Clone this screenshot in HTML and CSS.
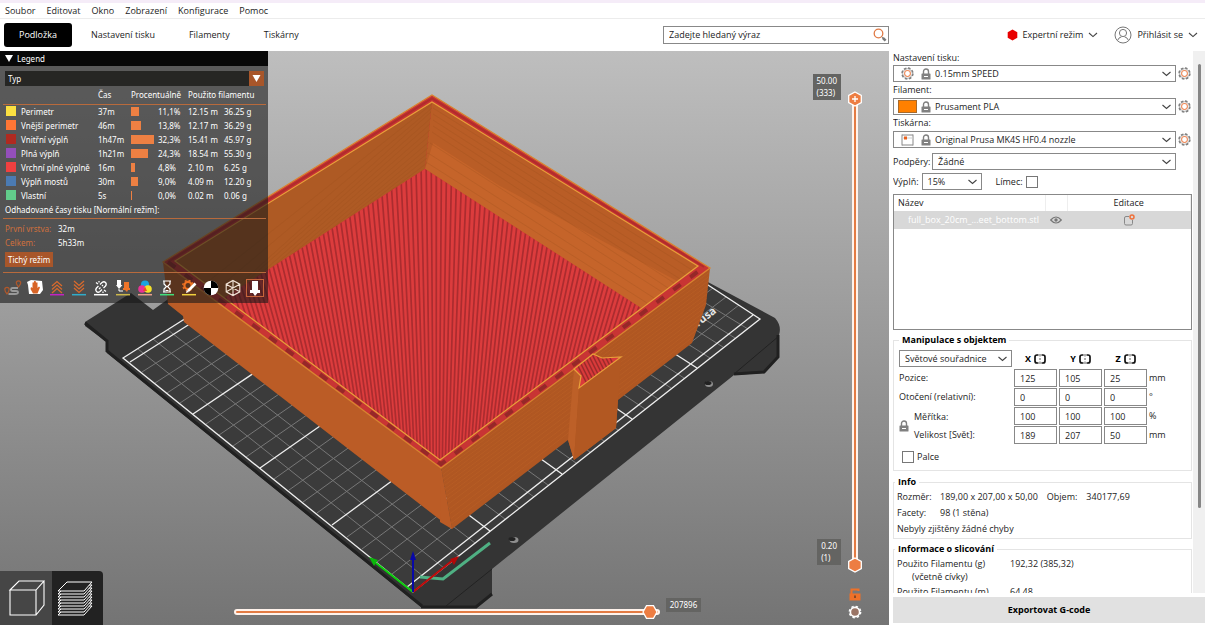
FILE: index.html
```html
<!DOCTYPE html>
<html lang="cs">
<head>
<meta charset="utf-8">
<title>PrusaSlicer</title>
<link rel="stylesheet" href="styles.css">
</head>
<body>
<svg class="defs" aria-hidden="true">
  <symbol id="lock" viewBox="0 0 10 12"><path d="M2.5 6V3.5a2.5 2.5 0 0 1 5 0V6" fill="none" stroke="#808080" stroke-width="1.4"/><rect x=".5" y="5.5" width="9" height="6" rx=".6" fill="#808080"/><path d="M3 8.5h4" stroke="#fff" stroke-width="1"/></symbol>
  <symbol id="gear" viewBox="0 0 12 12"><circle cx="6" cy="6" r="5" fill="none" stroke="#7d7d7d" stroke-width="1.4" stroke-dasharray="2.4 1.5"/><circle cx="6" cy="6" r="4.4" fill="none" stroke="#8b8b8b" stroke-width=".6"/><circle cx="6" cy="6" r="2.7" fill="none" stroke="#ed8a5a" stroke-width="1"/></symbol>
  <symbol id="chev" viewBox="0 0 10 6"><path d="M1 1l4 3.6L9 1" fill="none" stroke="#444" stroke-width="1.1"/></symbol>
  <symbol id="mirror" viewBox="0 0 12 10"><path d="M4.500 1H3Q1 1 1 3V7Q1 9 3 9H4.500M7.500 1H9Q11 1 11 3V7Q11 9 9 9H7.500" fill="none" stroke="#111" stroke-width="1.7"/><path d="M6 0v2.500M6 4v2M6 7.500V10" stroke="#333" stroke-width=".8"/></symbol>
</svg>

<nav class="menubar">
  <button>Soubor</button><button>Editovat</button><button>Okno</button><button>Zobrazení</button><button>Konfigurace</button><button>Pomoc</button>
</nav>

<header class="toolbar">
  <div class="toolbar-left">
    <nav class="tabs">
      <button class="tab active">Podložka</button><button class="tab">Nastavení tisku</button><button class="tab">Filamenty</button><button class="tab">Tiskárny</button>
    </nav>
    <div class="search">
      <input type="text" aria-label="Hledat" value="Zadejte hledaný výraz">
      <svg width="14" height="14" viewBox="0 0 14 14"><circle cx="5.500" cy="5.500" r="4.300" fill="none" stroke="#e07a45" stroke-width="1.300"/><path d="M8.600 8.600l1.500 1.500" stroke="#888" stroke-width="1"/><path d="M9.800 9.800l2.800 2.800" stroke="#777" stroke-width="2.600"/></svg>
    </div>
  </div>
  <div class="toolbar-right">
    <button class="mode"><svg width="11" height="12" viewBox="0 0 11 12"><path d="M5.500 .5L10.300 3.200V8.800L5.500 11.500L.7 8.800V3.200Z" fill="#e80000"/></svg>Expertní režim<svg width="10" height="6"><use href="#chev"/></svg></button>
    <button class="mode"><svg width="18" height="18" viewBox="0 0 18 18" fill="none" stroke="#777" stroke-width="1"><circle cx="9" cy="9" r="8"/><circle cx="9" cy="7" r="3.600"/><path d="M3.500 14.500Q4.500 11.500 7.500 10.800M14.500 14.500Q13.500 11.500 10.500 10.800"/></svg>Přihlásit se<svg width="10" height="6"><use href="#chev"/></svg></button>
  </div>
</header>

<main class="workspace">
  <section class="viewport">
    <svg class="scene" viewBox="0 51 889 574" preserveAspectRatio="xMinYMin slice">
      <defs>
        <linearGradient id="bg" x1="0" y1="0" x2="0" y2="1"><stop offset="0" stop-color="#bebebe"/><stop offset="1" stop-color="#747474"/></linearGradient>
        <clipPath id="floor"><path d="M425 169L641 308L440 460L224 298Z"/></clipPath>
        <clipPath id="star"><path d="M574 369L593 354L602 358L621 357L579 388L581 376Z"/></clipPath>
        <clipPath id="front"><path d="M441 468L710 268L706 305L692 343L618 400L616 428L574 460L568 440L452 529Z"/></clipPath>
      </defs>
      <rect y="51" width="889" height="574" fill="url(#bg)"/>
      <path d="M85 322L131 293L153 310L250 240L706 281L775 318Q782 326 779 335L778 357L764 373L734 375L492 569V594L476 607H421L107 353V342L85 326Z" fill="#343434"/>
      <path d="M85 323L107 341V351L422 606M778 335L778 357L764 372L734 374M492 594L476 607H421" fill="none" stroke="#202020" stroke-width="3"/>
      <path d="M779 336L734 374M492 569L446 606" stroke="#222" fill="none"/>
      <path d="M123 358L477 134L760 319L413 592Z" fill="#3b3b3b"/>
      <path fill="none" stroke="#777" stroke-width="1" d="M392 574L739 305M377 562L726 297M362 549L713 288M347 537L700 280M317 513l110-80M303 502l110-79M289 490l110-78M274 479l110-78M246 457l110-76M233 446l110-76M219 435l110-75M206 424l110-75M180 403l110-73M167 393l110-72M155 383l110-71M142 372l110-70
        M428 580L138 349M444 568L153 339M459 556L168 330M475 543L183 320M505 519L213 301M519 508L227 292M534 497L242 283M548 485L256 274M576 463L284 256M590 452L298 247M604 441L312 238M618 430L325 230M645 409L352 213M658 399L365 205M671 388L378 197M684 378L391 188M710 358L416 173M723 347L429 164M735 338L441 157M748 329L453 149"/>
      <path fill="none" stroke="#eee" stroke-width="1.300" d="M123 358L477 134L760 319L413 592ZM407 587L753 315M130 362L240 292M332 525l110-81M260 468l110-77M193 414l110-74M490 531L198 311M562 474L270 265M632 419L339 221M697 368L404 180"/>
      <text x="698" y="327" transform="rotate(-38 698 327)" class="bed-name">rusa</text>
      <ellipse cx="709" cy="384" rx="4" ry="3" fill="#8f8f8f"/><ellipse cx="708" cy="383" rx="3.500" ry="2" fill="#222"/>
      <ellipse cx="514" cy="540" rx="4.500" ry="3" fill="#8f8f8f"/><ellipse cx="512" cy="539" rx="3.500" ry="2" fill="#222"/>

      <path d="M163 262L441 468L452 529L184 322L183 316L168 304Z" fill="#bb5c26"/>
      <path d="M441 468L710 268L706 305L692 343L618 400L616 428L574 460L568 440L452 529Z" fill="#b05722"/>
      <g clip-path="url(#front)" fill="none" stroke="#c06629" stroke-width=".4"><path d="M441 472L715 268M441 476L715 272M441 480L715 276M441 484L715 280M441 488L715 284M441 492L715 288M441 496L715 292M441 500L715 296M441 504L715 300M443 508L715 304M445 512L715 308M447 516L715 312M449 520L715 316M450 524L715 320"/></g>
      <path d="M441 468L440 522L452 529Z" fill="#bb5c26"/>
      <path d="M163 262L432 95L710 268L441 468Z" fill="#c83434"/>
      <path d="M168 262L432 98.500L704 267" fill="none" stroke="#b02c2c" stroke-width="2"/>
      <path d="M168 262L441 464L704 267" fill="none" stroke="#962828" stroke-width="4" stroke-dasharray="9 12"/>
      <path d="M163 262L432 95L710 268L441 468Z" fill="none" stroke="#d98530" stroke-width="1.300"/>
      <path d="M175 261L432 102L425 169L224 298Z" fill="#ae5a24"/>
      <path d="M432 102L698 266L641 308L425 169Z" fill="#b95d26"/>
      <path d="M433 143L500 186L677 281L641 308L425 169Z" fill="#c5642a"/>
      <g stroke="#9b501f" stroke-width=".5" opacity=".55"><path d="M432 104L205 284M432 108L215 291M431 112L224 298M431 118L240 287M430 124L258 276M430 130L276 264M429 136L294 253M429 142L312 241M428 148L330 230M428 153L348 218M427 158L366 207M427 163L390 191"/><path d="M433 108L692 270M433 114L686 275M433 120L680 279M433 126L674 283M432 132L668 288M430 143L662 292M428 153L654 298M426 162L647 303"/></g>
      <g clip-path="url(#floor)"><path d="M170 150H660V470H170Z" fill="#dc3c3d"/><circle cx="436" cy="900" r="600" fill="none" stroke="#ab2c2f" stroke-width="500" stroke-dasharray="1.700 2.500"/></g>
      <path d="M175 261L432 102L698 266L440 460Z" fill="none" stroke="#e8a03a" stroke-width="1.200"/>
      <path d="M574 369L581 376L579 388L574 460L568 440Z" fill="#bd6028"/>
      <path d="M579 388L621 357L618 400L616 428L574 460Z" fill="#b25822"/>
      <g clip-path="url(#star)"><path d="M570 350H625V390H570Z" fill="#d93a3a"/><path d="M570 350l20 40M574 350l20 40M578 350l20 40M582 350l20 40M586 350l20 40M590 350l20 40M594 350l20 40M598 350l20 40M602 350l20 40M606 350l20 40" stroke="#9d2b2b" stroke-width="1.500"/></g>
      <path d="M574 369L593 354L602 358L621 357L579 388L581 376Z" fill="none" stroke="#e8a03a" stroke-width="1.200"/>

      <path d="M420 577L443 579L490 543" fill="none" stroke="#4fb083" stroke-width="3"/>
      <path d="M413 592L376 563" stroke="#0bcf0b" stroke-width="2"/><path d="M369 557l9 3-4 6Z" fill="#0ab80a"/>
      <path d="M413 592L453 560" stroke="#c00808" stroke-width="2"/><path d="M459 556l-9 3 4 6Z" fill="#b30808"/>
      <path d="M413 592V557" stroke="#0808a8" stroke-width="2"/><path d="M413 551l3 9h-6Z" fill="#0808a8"/>
    </svg>

    <aside class="legend">
      <h2><svg width="8" height="7" viewBox="0 0 8 7"><path d="M0 0H8L4 7Z" fill="#fff"/></svg>Legend</h2>
      <div class="legend-body">
        <select class="view-type" aria-label="Zobrazení"><option>Typ</option></select>
        <table>
          <colgroup><col class="c-swatch"><col class="c-name"><col class="c-time"><col class="c-bar"><col class="c-pct"><col class="c-len"><col></colgroup>
          <thead><tr><th colspan="2"></th><th>Čas</th><th colspan="2">Procentuálně</th><th colspan="2">Použito filamentu</th></tr></thead>
          <tbody>
            <tr><td><i class="sw yellow"></i></td><td>Perimetr</td><td>37m</td><td><i class="bar" style="width:8px"></i></td><td>11,1%</td><td>12.15 m</td><td>36.25 g</td></tr>
            <tr><td><i class="sw orange"></i></td><td>Vnější perimetr</td><td>46m</td><td><i class="bar" style="width:10px"></i></td><td>13,8%</td><td>12.17 m</td><td>36.29 g</td></tr>
            <tr><td><i class="sw darkred"></i></td><td>Vnitřní výplň</td><td>1h47m</td><td><i class="bar" style="width:23px"></i></td><td>32,3%</td><td>15.41 m</td><td>45.97 g</td></tr>
            <tr><td><i class="sw purple"></i></td><td>Plná výplň</td><td>1h21m</td><td><i class="bar" style="width:17px"></i></td><td>24,3%</td><td>18.54 m</td><td>55.30 g</td></tr>
            <tr><td><i class="sw red"></i></td><td>Vrchní plné výplně</td><td>16m</td><td><i class="bar" style="width:4px"></i></td><td>4,8%</td><td>2.10 m</td><td>6.25 g</td></tr>
            <tr><td><i class="sw blue"></i></td><td>Výplň mostů</td><td>30m</td><td><i class="bar" style="width:7px"></i></td><td>9,0%</td><td>4.09 m</td><td>12.20 g</td></tr>
            <tr><td><i class="sw green"></i></td><td>Vlastní</td><td>5s</td><td><i class="bar" style="width:1px"></i></td><td>0,0%</td><td>0.02 m</td><td>0.06 g</td></tr>
          </tbody>
        </table>
        <p class="times-title">Odhadované časy tisku [Normální režim]:</p>
        <dl><dt>První vrstva:</dt><dd>32m</dd><dt>Celkem:</dt><dd>5h33m</dd></dl>
        <button class="quiet">Tichý režim</button>
        <div class="tools">
          <button aria-label="Přejezdy"><svg viewBox="0 0 18 18"><path d="M4.500 15H11Q14 15 14 13.500T12 12H8.500Q7 12 7 10.500T8.500 9H14" fill="none" stroke="#999" stroke-width="1.800"/><path d="M3 15Q.8 12 .8 10.500a2.200 2.200 0 0 1 4.400 0Q5.200 12 3 15ZM14.500 8Q12.300 5 12.300 4a2.200 2.200 0 0 1 4.400 0Q16.700 5 14.500 8Z" fill="none" stroke="#b0582b" stroke-width="1.200"/></svg></button>
          <button aria-label="Čištění"><svg viewBox="0 0 18 18"><path d="M1 3l4-2 11 1 1 9-3 4-11 0-1-9Z" fill="#fff"/><path d="M5 8l1.500 1V3.500l1.300 0 .4-1.500 1.400 0 .4 1.500 1.500 0V9l1.500-1.500 1 1L11.500 14.500H7L4.500 10Z" fill="#d86426"/></svg></button>
          <button aria-label="Retrakce"><svg viewBox="0 0 18 18"><path d="M4 7l5-4.500L14 7M4 10.500L9 6l5 4.500M4 14l5-4.500 5 4.500" fill="none" stroke="#d96a2c" stroke-width="1.300"/><path d="M2 15.700h14" stroke="#c322c3" stroke-width="1.500"/></svg></button>
          <button aria-label="Deretrakce"><svg viewBox="0 0 18 18"><path d="M4 2l5 4.500L14 2M4 5.500L9 10l5-4.500M4 9l5 4.500L14 9" fill="none" stroke="#d96a2c" stroke-width="1.300"/><path d="M2 15.700h14" stroke="#31acc9" stroke-width="1.500"/></svg></button>
          <button aria-label="Švy"><svg viewBox="0 0 18 18"><path d="M8 5.500L10 3.500Q12 2 13.500 3.500T13.500 7L11.500 9M10 10.500L8 12.500Q6 14 4.500 12.500T4.500 9L6.500 7M7 10l1.500-1.500M10 7l1-1M4 3.500l2 1.500M7 2v1.500M12 11l2 1.500M11 12.500V14" fill="none" stroke="#fff" stroke-width="1.300"/><path d="M2 15.700h14" stroke="#fff" stroke-width="1.500"/></svg></button>
          <button aria-label="Výměny nástroje"><svg viewBox="0 0 18 18"><path d="M3 1h4v5h1.500L5 10 2 6h1Z" fill="#fff"/><path d="M10 3h5v6h1v2h-2l-1 2-2-2H9V9h1Z" fill="#ee7429"/><path d="M5 10v2h4" stroke="#fff" fill="none"/><path d="M2 15.700h14" stroke="#cdb84a" stroke-width="1.500"/></svg></button>
          <button aria-label="Změny barvy"><svg viewBox="0 0 18 18"><circle cx="9" cy="5.500" r="4" fill="#19a5e0"/><circle cx="6" cy="10" r="3.800" fill="#e73395"/><circle cx="12" cy="10" r="3.800" fill="#f5e12a"/><path d="M9 7.500l2 4.500H7Z" fill="#e84a2c"/><path d="M2 15.700h14" stroke="#e9a08d" stroke-width="1.500"/></svg></button>
          <button aria-label="Pauzy"><svg viewBox="0 0 18 18"><path d="M5 2H13M5 13H13M6 2V5L8.500 7.500 6 10v3M12 2V5L9.500 7.500 12 10v3M7.500 11.500h3" fill="none" stroke="#fff" stroke-width="1.200"/><path d="M2 15.700h14" stroke="#42df79" stroke-width="1.500"/></svg></button>
          <button aria-label="Vlastní G-kódy"><svg viewBox="0 0 18 18"><circle cx="8" cy="6.500" r="3.600" fill="none" stroke="#ee7122" stroke-width="2.200"/><circle cx="8" cy="6.500" r="5.200" fill="none" stroke="#ee7122" stroke-width="1.400" stroke-dasharray="2 2.080"/><path d="M15.500 4.500L8 12" stroke="#fff" stroke-width="2.600"/><path d="M6 14l.8-3L9 13Z" fill="#fff"/><path d="M2 15.700h14" stroke="#f1d13d" stroke-width="1.500"/></svg></button>
          <button aria-label="Těžiště"><svg viewBox="0 0 18 18"><circle cx="9" cy="9" r="7.300" fill="#fff"/><path d="M9 9V1.700A7.300 7.300 0 0 1 16.300 9ZM9 9V16.300A7.300 7.300 0 0 1 1.700 9Z" fill="#000"/></svg></button>
          <button aria-label="Obálky"><svg viewBox="0 0 18 18"><path d="M9 1.500L15.800 5.200V12.800L9 16.500L2.200 12.800V5.200ZM9 1.500V16.500M2.200 5.200L15.800 12.800M15.800 5.200L2.200 12.800" fill="none" stroke="#f1e3d6" stroke-width="1.100"/></svg></button>
          <button class="on" aria-label="Značka nástroje"><svg viewBox="0 0 16 16"><path d="M5 1h6v9h2v3h-2.500L8 16 6 13H3v-3h2Z" fill="#fff"/></svg></button>
        </div>
      </div>
    </aside>

    <div class="views">
      <button aria-label="3D editor"><svg viewBox="0 0 40 40"><path d="M3 12L12 3H37L29 12ZM3 12V37H29V12M29 37L37 27V3" fill="none" stroke="#fff" stroke-width="1.100"/></svg></button>
      <button class="on" aria-label="Náhled"><svg viewBox="0 0 40 40" fill="#222" stroke="#fff" stroke-width="1"><path d="M3 37L12 28H37L29 37Z"/><path d="M3 34L12 25H37L29 34Z"/><path d="M3 31L12 22H37L29 31Z"/><path d="M3 28L12 19H37L29 28Z"/><path d="M3 25L12 16H37L29 25Z"/><path d="M3 22L12 13H37L29 22Z"/><path d="M3 19L12 10H37L29 19Z"/><path d="M3 16L12 7H37L29 16Z"/><path d="M3 13L12 4H37L29 13Z"/></svg></button>
    </div>

    <div class="moves">
      <input type="range" min="0" max="207896" value="207896" aria-label="Pohyby">
      <output>207896</output>
    </div>

    <div class="layers">
      <div class="layer-slider">
        <input type="range" min="1" max="333" value="333" aria-label="Horní vrstva" class="upper">
        <input type="range" min="1" max="333" value="1" aria-label="Dolní vrstva">
        <output class="top">50.00<br>(333)</output>
        <output class="bottom">0.20<br>(1)</output>
      </div>
      <button aria-label="Zámek"><svg width="12" height="14" viewBox="0 0 12 14"><path d="M2.500 7V2.500H9.500V4" fill="none" stroke="#ee7129" stroke-width="2"/><rect x=".5" y="6.500" width="11" height="7" fill="#ee7129"/><path d="M5 8.500h2v2.500H5Z" fill="#8a4a26"/></svg></button>
      <button aria-label="Nastavení"><svg width="14" height="14" viewBox="0 0 14 14"><circle cx="7" cy="7" r="4.600" fill="#9a7566" stroke="#fff" stroke-width="1.600"/><circle cx="7" cy="7" r="5.700" fill="none" stroke="#fff" stroke-width="1.400" stroke-dasharray="2.400 2.080"/></svg></button>
    </div>
  </section>

  <aside class="sidebar">
    <div class="scroll">
      <div class="panel">
        <label for="print">Nastavení tisku:</label>
        <div class="preset"><div class="combo"><span class="icons"><svg width="13" height="13"><use href="#gear"/></svg><svg width="10" height="12"><use href="#lock"/></svg></span><select id="print"><option>0.15mm SPEED</option></select></div><button aria-label="Upravit"><svg width="13" height="13"><use href="#gear"/></svg></button></div>
        <label for="fil">Filament:</label>
        <div class="preset"><div class="combo"><span class="icons"><i class="filament"></i><svg width="10" height="12"><use href="#lock"/></svg></span><select id="fil"><option>Prusament PLA</option></select></div><button aria-label="Upravit"><svg width="13" height="13"><use href="#gear"/></svg></button></div>
        <label for="prn">Tiskárna:</label>
        <div class="preset"><div class="combo"><span class="icons"><svg width="13" height="12" viewBox="0 0 13 12"><path d="M1 .5V11.500M12 .5V11.500M1 1H12M1 11H12" stroke="#888" fill="none"/><path d="M1 4h11" stroke="#ccc"/><path d="M3 2.500h3v3h-3Z" fill="#e8601c"/></svg><svg width="10" height="12"><use href="#lock"/></svg></span><select id="prn"><option>Original Prusa MK4S HF0.4 nozzle</option></select></div><button aria-label="Upravit"><svg width="13" height="13"><use href="#gear"/></svg></button></div>
        <div class="line supports"><label for="sup">Podpěry:</label><select id="sup"><option>Žádné</option></select></div>
        <div class="line"><label for="inf">Výplň:</label><select id="inf" class="infill"><option>15%</option></select><label for="brim" class="brim">Límec:</label><input type="checkbox" id="brim"></div>

        <div class="objects">
          <table>
            <thead><tr><th class="name">Název</th><th class="eye"></th><th>Editace</th></tr></thead>
            <tbody><tr><td class="name">full_box_20cm_...eet_bottom.stl</td><td class="eye"><svg width="12" height="8" viewBox="0 0 12 8"><path d="M.7 4Q6-2 11.300 4Q6 10 .7 4Z" fill="none" stroke="#777" stroke-width="1.200"/><circle cx="6" cy="4" r="1.700" fill="#777"/></svg></td><td><svg width="12" height="12" viewBox="0 0 12 12"><path d="M6 2.500H3Q1.500 2.500 1.500 4V9.500Q1.500 11 3 11H8Q9.500 11 9.500 9.500V6" fill="none" stroke="#888"/><circle cx="9" cy="3" r="2" fill="none" stroke="#f0703a" stroke-width="1.500"/></svg></td></tr></tbody>
          </table>
        </div>

        <fieldset class="manip">
          <legend>Manipulace s objektem</legend>
          <div class="mgrid">
            <select aria-label="Souřadnice"><option>Světové souřadnice</option></select>
            <b>X<svg width="12" height="10"><use href="#mirror"/></svg></b><b>Y<svg width="12" height="10"><use href="#mirror"/></svg></b><b>Z<svg width="12" height="10"><use href="#mirror"/></svg></b><span></span>
            <span>Pozice:</span><input aria-label="Pozice X" value="125"><input aria-label="Pozice Y" value="105"><input aria-label="Pozice Z" value="25"><span>mm</span>
            <span>Otočení (relativní):</span><input aria-label="Otočení X" value="0"><input aria-label="Otočení Y" value="0"><input aria-label="Otočení Z" value="0"><span>°</span>
            <span class="linked"><svg width="10" height="12"><use href="#lock"/></svg><span>Měřítka:</span><span>Velikost [Svět]:</span></span>
            <input aria-label="Měřítko X" value="100"><input aria-label="Měřítko Y" value="100"><input aria-label="Měřítko Z" value="100"><span>%</span>
            <input aria-label="Velikost X" value="189"><input aria-label="Velikost Y" value="207"><input aria-label="Velikost Z" value="50"><span>mm</span>
          </div>
          <label class="inches"><input type="checkbox">Palce</label>
        </fieldset>

        <fieldset class="info">
          <legend>Info</legend>
          <p><span>Rozměr:</span><span>189,00 x 207,00 x 50,00</span><span>Objem:</span><span>340177,69</span></p>
          <p><span>Facety:</span><span>98 (1 stěna)</span></p>
          <p>Nebyly zjištěny žádné chyby</p>
        </fieldset>

        <fieldset class="sliced">
          <legend>Informace o slicování</legend>
          <dl><dt>Použito Filamentu (g)<span>(včetně cívky)</span></dt><dd>192,32 (385,32)</dd><dt>Použito Filamentu (m)</dt><dd>64,48</dd></dl>
        </fieldset>
      </div>
      <div class="scrollbar"><i></i></div>
    </div>
    <button class="export">Exportovat G-code</button>
  </aside>
</main>
</body>
</html>
```
FILE: styles.css
```css
* { box-sizing: border-box; }
body {
  margin: 0;
  height: 100vh;
  display: flex;
  flex-direction: column;
  overflow: hidden;
  background: #fff;
  color: #1c1c1c;
  font: 9px/14px "Open Sans", "Noto Sans", sans-serif;
}
button, input, select { font: inherit; color: inherit; margin: 0; }
button { border: 0; padding: 0; background: none; }
svg { display: block; flex: none; }
.defs { position: absolute; width: 0; height: 0; }

.menubar {
  display: flex;
  gap: 11px;
  height: 19px;
  padding: 0 5px;
  border-top: 3px solid #f5ecf8;
  border-bottom: 1px solid #ececec;
}
.toolbar {
  display: grid;
  grid-template-columns: minmax(0, 1fr) 316px;
  height: 32px;
  align-items: center;
}
.toolbar-left { display: flex; justify-content: space-between; align-items: center; padding-left: 4px; }
.tabs { display: flex; gap: 4px; }
.tab { height: 24px; padding: 0 15px; border-radius: 3px; white-space: nowrap; }
.tab.active { background: #000; color: #fff; }
.search {
  display: flex;
  align-items: center;
  width: 226px;
  height: 18px;
  padding: 0 1px 0 5px;
  border: 1px solid #888;
}
.search input { flex: 1; min-width: 0; border: 0; padding: 0; background: none; outline: 0; }
.toolbar-right { display: flex; justify-content: flex-end; gap: 16px; padding-right: 7px; }
.mode { display: flex; align-items: center; gap: 5px; white-space: nowrap; }

.workspace { flex: 1; min-height: 0; display: grid; grid-template-columns: minmax(0, 1fr) 316px; }
.viewport { position: relative; overflow: hidden; background: #888; font-family: "Noto Sans", sans-serif; color: #fff; }
.scene { position: absolute; width: 100%; height: 100%; }
.bed-name { font: bold 11px "Noto Sans", sans-serif; fill: #e8e8e8; }

.legend { position: absolute; top: 0; left: 0; width: 268px; background: rgba(25, 25, 25, .6); font-size: 8px; }
.legend h2 { display: flex; align-items: center; gap: 4px; height: 15px; margin: 0; padding-left: 5px; background: #080808; font-size: 8px; font-weight: 400; }
.legend-body { padding: 5px 2px 6px 3px; }
.view-type {
  display: block;
  appearance: none;
  width: calc(100% - 4px);
  height: 15px;
  margin-left: 2px;
  padding: 0 3px;
  border: 0;
  background: url("data:image/svg+xml,%3Csvg xmlns='http://www.w3.org/2000/svg' width='15' height='15'%3E%3Cpath fill='%23a8562a' d='M0 0h15v15H0z'/%3E%3Cpath fill='%23fff' d='M3.500 4h8l-4 7z'/%3E%3C/svg%3E") right center no-repeat #262624;
}
.legend table { width: 100%; table-layout: fixed; border-collapse: collapse; }
.legend th, .legend td { height: 14px; padding: 0; line-height: 13px; text-align: left; font-weight: 400; white-space: nowrap; }
.legend th { height: 18px; border-bottom: 1px solid #b86a3c; }
.c-swatch { width: 18px; }
.c-name { width: 77px; }
.c-time { width: 33px; }
.c-bar { width: 27px; }
.c-pct { width: 30px; }
.c-len { width: 36px; }
.legend td:first-child { padding-left: 3px; }
.legend table i { display: block; height: 9px; }
.sw { width: 10px; }
.legend table i.sw { height: 10px; }
.yellow { background: #fbe041; } .orange { background: #ff7635; } .darkred { background: #b02a20; }
.purple { background: #944fba; } .red { background: #f04040; } .blue { background: #4b7bb3; } .green { background: #62cc8b; }
.bar { background: #ed8043; }
.times-title { margin: 1px 0 0; padding: 0 2px 1px; border-bottom: 1px solid #b86a3c; }
.legend dl { display: grid; grid-template-columns: 53px 1fr; margin: 3px 0 2px 2px; }
.legend dt { color: #d0703c; }
.legend dd { margin: 0; }
.quiet { height: 15px; margin-left: 2px; padding: 0 3px; background: #a8562a; line-height: 14px; }
.tools { display: flex; gap: 4px; margin-top: 5px; padding: 6px 0 0 1px; border-top: 1px solid #b86a3c; }
.tools button { width: 18px; height: 18px; }
.tools svg { width: 18px; height: 18px; }
.tools .on { border: 1px solid #c7653b; }
.tools .on svg { width: 16px; height: 16px; }

.views { position: absolute; left: 0; bottom: 0; display: flex; border-radius: 0 4px 0 0; overflow: hidden; }
.views button { width: 52px; height: 54px; padding: 7px; background: #464646; }
.views .on { width: 51px; padding: 7px 3px; background: #222; }
.views svg { width: 40px; height: 40px; }

input[type="range"] { appearance: none; margin: 0; background: none; }
input[type="range"]::-webkit-slider-thumb {
  appearance: none;
  width: 16px;
  height: 16px;
  background: url("data:image/svg+xml,%3Csvg xmlns='http://www.w3.org/2000/svg' width='16' height='16'%3E%3Cpath d='M1 8L4.500 1.700h7L15 8l-3.500 6.300h-7z' fill='%23ed7d42' stroke='%23fff' stroke-width='1.300'/%3E%3C/svg%3E");
}
.moves { position: absolute; left: 234px; right: 0; bottom: 5px; display: flex; align-items: flex-end; gap: 6px; }
.moves input { width: 65%; height: 16px; }
.moves input::-webkit-slider-runnable-track { height: 6px; border: 2px solid #fff3ec; border-radius: 3px; background: #e37b43; }
.moves input::-webkit-slider-thumb { margin-top: -7px; }
.viewport output { background: #646462; color: #fff; font-size: 8px; line-height: 12px; }
.moves output { padding: 1px 4px; margin-bottom: 8px; }
.layers { position: absolute; top: 40px; bottom: 6px; right: 26px; display: flex; flex-direction: column; align-items: center; gap: 4px; }
.layer-slider { position: relative; flex: 1; width: 16px; margin-bottom: 10px; }
.layer-slider::before { content: ""; position: absolute; inset: 8px 5px; border: 2px solid #fff3ec; border-radius: 3px; background: #e37b43; }
.layer-slider input { position: absolute; inset: 0; width: 16px; height: 100%; writing-mode: vertical-lr; direction: rtl; pointer-events: none; }
.layer-slider input::-webkit-slider-thumb {
  pointer-events: auto;
  background: url("data:image/svg+xml,%3Csvg xmlns='http://www.w3.org/2000/svg' width='16' height='16'%3E%3Cpath d='M8 1l6.300 3.500v7L8 15l-6.300-3.500v-7z' fill='%23ed7d42' stroke='%23fff' stroke-width='1.300'/%3E%3C/svg%3E");
}
.layer-slider .upper::-webkit-slider-thumb {
  background: url("data:image/svg+xml,%3Csvg xmlns='http://www.w3.org/2000/svg' width='16' height='16'%3E%3Cpath d='M8 1l6.300 3.500v7L8 15l-6.300-3.500v-7z' fill='%23ed7d42' stroke='%23fff' stroke-width='1.300'/%3E%3Cpath d='M8 5v6M5 8h6' stroke='%23fff' stroke-width='1.300'/%3E%3C/svg%3E");
}
.layer-slider output { position: absolute; right: 22px; padding: 1px 4px; }
.layer-slider .top { top: -17px; }
.layer-slider .bottom { bottom: 8px; }

.sidebar { display: flex; flex-direction: column; min-height: 0; padding-left: 4px; }
.scroll { flex: 1; min-height: 0; display: flex; overflow: hidden; }
.panel { flex: 1; min-width: 0; }
.panel > label { display: block; height: 16px; line-height: 15px; }
.panel > label:first-child { height: 14px; line-height: 13px; }
.scrollbar { width: 13px; padding: 13px 4px 0 5px; background: #f0f0f0; border-left: 1px solid #fff; }
.scrollbar i { display: block; height: 84%; border-radius: 2px; background: #868686; }
.sidebar select {
  appearance: none;
  height: 17px;
  min-width: 0;
  padding: 0 14px 0 5px;
  border: 1px solid #888;
  border-radius: 0;
  background: url("data:image/svg+xml,%3Csvg xmlns='http://www.w3.org/2000/svg' width='14' height='6'%3E%3Cpath d='M1.500 1l4 3.500 4-3.500' fill='none' stroke='%23444' stroke-width='1.100'/%3E%3C/svg%3E") right center no-repeat #fff;
}
.preset { display: flex; align-items: center; gap: 2px; padding-right: 1px; }
.combo { position: relative; flex: 1; display: flex; }
.combo select { width: 100%; padding-left: 41px; }
.icons { position: absolute; left: 5px; top: 2px; display: grid; grid-template-columns: 19px 11px; gap: 3px; height: 13px; align-items: center; justify-items: center; }
.filament { width: 19px; height: 13px; background: #ff8000; border: 1px solid #a86a2a; }
.line { display: flex; align-items: center; gap: 3px; margin-top: 3px; }
.supports { margin-top: 5px; padding-right: 16px; }
.supports label { width: 36px; }
.supports select { flex: 1; }
.sidebar .infill { width: 60px; }
.brim { margin-left: 11px; }
input[type="checkbox"] { appearance: none; width: 12px; height: 12px; border: 1px solid #777; background: #fff; }

.objects { height: 136px; margin-top: 4px; border: 1px solid #888; }
.objects table { width: 100%; border-collapse: collapse; table-layout: fixed; }
.objects th { height: 16px; padding: 0; font-weight: 400; border-right: 1px solid #eee; }
.objects td { height: 18px; padding: 0; background: #d8d8d8; }
.objects .name { width: 151px; padding-left: 4px; text-align: left; }
.objects td.name { padding-left: 14px; color: #fff; }
.objects .eye { width: 22px; }
.objects svg { margin: 0 auto; }

fieldset { min-width: 0; margin: 4px 0 0; padding: 0 5px; border: 1px solid #e4e4e4; }
legend { padding: 0 3px; margin-left: -2px; color: #000; font-weight: 700; }
.manip { margin-top: 3px; }
.manip legend { margin-left: 0; }
.mgrid { display: grid; grid-template-columns: 113px 43px 43px 43px 1fr; column-gap: 2px; row-gap: 1px; align-items: center; margin-top: 2px; }
.mgrid b { display: flex; align-items: center; justify-content: center; gap: 3px; height: 19px; color: #000; }
.mgrid input { width: 100%; min-width: 0; height: 18px; padding: 0 5px; border: 1px solid #888; }
.linked { grid-row: 4 / span 2; display: grid; grid-template: 19px 18px / 12px 1fr; column-gap: 3px; align-items: center; }
.linked svg { grid-row: 1 / span 2; }
.linked span { grid-column: 2; }
.inches { display: flex; align-items: center; gap: 3px; margin: 6px 0 6px 3px; }
.info p { margin: 0; height: 16px; line-height: 16px; display: flex; }
.info, .sliced { padding-left: 3px; }
.info p span { margin-right: 9px; }
.info p span:first-child { width: 34px; }
.info { padding-bottom: 1px; }
.sliced { margin-top: 3px; }
.sliced dl { display: grid; grid-template-columns: 113px 1fr; row-gap: 2px; margin: 1px 0 0; line-height: 13px; }
.sliced dt span { display: block; margin-left: 15px; }
.sliced dd { margin: 0; }
.export { height: 26px; margin: 4px 0 2px; background: #e1e1e1; color: #000; font-weight: 700; }
```
